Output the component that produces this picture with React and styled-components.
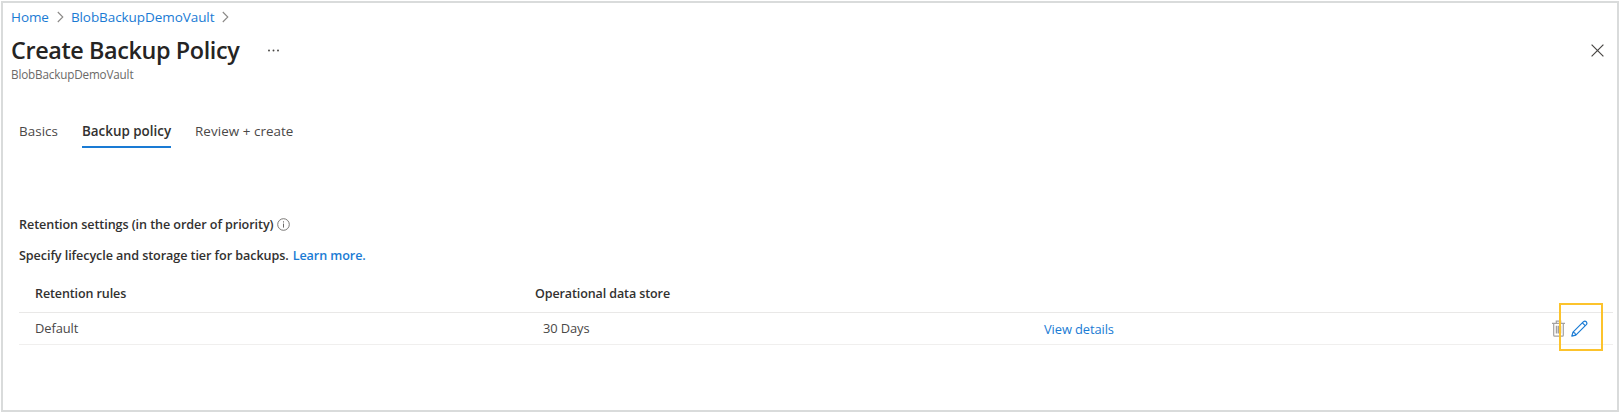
import React from 'react';
import styled, { createGlobalStyle } from 'styled-components';

const Global = createGlobalStyle`
  * { box-sizing: border-box; }
  body { margin: 0; background: #fff; }
`;

const Page = styled.div`
  height: 413px;
  padding: 1px;
  font-family: "Open Sans", "Noto Sans", sans-serif;
  color: #323130;
  white-space: nowrap;
`;

const Blade = styled.main`
  height: 411px;
  border: 2px solid #d9dbdb;
  padding: 4px 4px 0 8px;
`;

const Link = styled.a`
  color: #1a7bd4;
  text-decoration: none;
  cursor: pointer;
`;

const Breadcrumb = styled.nav`
  display: flex;
  align-items: center;
  height: 20px;
  font-size: 13.5px;
  letter-spacing: -0.07px;
  line-height: 20px;
  svg { margin: 0 7px 0 8px; }
`;

const Header = styled.header`
  display: flex;
  align-items: center;
  height: 34px;
  margin-top: 6px;
`;

const Title = styled.h1`
  margin: 0;
  width: 256px;
  font-size: 23.4px;
  font-weight: 600;
  line-height: 34px;
  letter-spacing: -0.39px;
  color: #252423;
`;

const IconButton = styled.button`
  display: flex;
  padding: 0;
  border: 0;
  background: none;
  cursor: pointer;
`;

const CloseButton = styled(IconButton)`
  margin: 0 9px 0 auto;
`;

const Subtitle = styled.div`
  margin-top: -1px;
  font-size: 11.7px;
  line-height: 16px;
  letter-spacing: -0.16px;
  color: #6b6967;
`;

const Tabs = styled.div`
  display: flex;
  gap: 24px;
  margin: 39px 0 0 8px;
`;

const Tab = styled.div`
  padding-bottom: 5px;
  border-bottom: 2px solid ${p => (p.$active ? '#1a7bd4' : 'transparent')};
  font-size: 13.4px;
  font-weight: ${p => (p.$active ? 600 : 400)};
  line-height: 20px;
  letter-spacing: ${p => (p.$active ? '0' : '0.06px')};
  color: ${p => (p.$active ? '#323130' : '#4a4847')};
`;

const Section = styled.section`
  margin: 67px 0 0 8px;
`;

const Label = styled.div`
  display: flex;
  align-items: center;
  gap: ${p => p.$gap}px;
  margin-bottom: ${p => p.$below}px;
  font-size: 12.6px;
  font-weight: 600;
  line-height: 20px;
  letter-spacing: -0.08px;
  svg { margin-top: -2px; }
`;

const Row = styled.div`
  display: grid;
  grid-template-columns: 500px 500px 1fr auto;
  align-items: center;
  height: ${p => (p.$head ? 38 : 32)}px;
  padding: 0 25px 0 16px;
  border-bottom: 1px solid ${p => (p.$head ? '#e9e8e7' : '#f0efee')};
  font-size: ${p => (p.$head ? 12.5 : 12.9)}px;
  font-weight: ${p => (p.$head ? 600 : 400)};
  letter-spacing: -0.1px;
  line-height: 20px;
`;

const Cell = styled.div`
  padding: 0 0 ${p => p.$lift || 0}px ${p => p.$indent || 0}px;
  color: ${p => (p.$soft ? '#4a4847' : 'inherit')};
`;

const Actions = styled.div`
  position: relative;
  display: flex;
  gap: 6px;
  margin-top: -1px;
`;

const Highlight = styled.div`
  position: absolute;
  left: 7px;
  top: -17px;
  width: 44px;
  height: 48px;
  border: 2px solid #fcc32c;
  pointer-events: none;
`;

const Chevron = () => (
  <svg width="7" height="12" viewBox="0 0 7 12" fill="none" stroke="#8a8886" strokeWidth="1.1">
    <path d="M0.8 1 L5.8 6 L0.8 11" />
  </svg>
);

const Dots = () => (
  <svg width="14" height="4" viewBox="0 0 14 4" fill="#484644">
    <circle cx="2" cy="2.5" r="0.95" /><circle cx="6.5" cy="2.5" r="0.95" /><circle cx="11" cy="2.5" r="0.95" />
  </svg>
);

const Close = () => (
  <svg width="13" height="13" viewBox="0 0 13 13" stroke="#484644" strokeWidth="1.2">
    <path d="M0.6 0.6 L12.4 12.4 M12.4 0.6 L0.6 12.4" />
  </svg>
);

const Info = () => (
  <svg width="13" height="13" viewBox="0 0 13 13" fill="none" stroke="#6b6967">
    <circle cx="6.5" cy="6.5" r="5.8" strokeWidth="0.9" />
    <path d="M6.5 5.6 V9.6 M6.5 3.3 V4.5" strokeWidth="1" />
  </svg>
);

const Trash = () => (
  <svg width="13" height="17" viewBox="0 0 13 17" fill="none" stroke="#a3a1a0" strokeWidth="1.2">
    <path d="M0 3.4 H13 M4.3 3.2 V1.2 H8.7 V3.2 M1.7 3.4 V15.2 Q1.7 16.2 2.7 16.2 H10.3 Q11.3 16.2 11.3 15.2 V3.4" />
    <path d="M4.5 5.8 V13.6 M6.5 5.8 V13.6 M8.5 5.8 V13.6" strokeWidth="1.5" />
  </svg>
);

const Pencil = () => (
  <svg width="17" height="17" viewBox="0 0 17 17" fill="none" stroke="#1a7bd4" strokeWidth="1.2" strokeLinejoin="round">
    <path d="M0.8 16.2 L2 12.2 L12.5 1.7 Q13.9 0.5 15.3 1.8 Q16.5 3.2 15.3 4.6 L4.8 15.1 Z" />
    <path d="M11.4 2.8 L14.2 5.6 M2 12.2 Q4.4 12.7 4.8 15.1" />
  </svg>
);

export default function App() {
  return (
    <>
      <Global />
      <Page>
        <Blade>
          <Breadcrumb>
            <Link>Home</Link><Chevron />
            <Link>BlobBackupDemoVault</Link><Chevron />
          </Breadcrumb>
          <Header>
            <Title>Create Backup Policy</Title>
            <IconButton aria-label="More"><Dots /></IconButton>
            <CloseButton aria-label="Close"><Close /></CloseButton>
          </Header>
          <Subtitle>BlobBackupDemoVault</Subtitle>
          <Tabs>
            <Tab>Basics</Tab>
            <Tab $active>Backup policy</Tab>
            <Tab>Review + create</Tab>
          </Tabs>
          <Section>
            <Label $gap={3} $below={11}>Retention settings (in the order of priority) <Info /></Label>
            <Label $gap={4} $below={9}>
              <span>Specify lifecycle and storage tier for backups.</span>
              <Link>Learn more.</Link>
            </Label>
            <Row $head>
              <Cell>Retention rules</Cell>
              <Cell>Operational data store</Cell>
            </Row>
            <Row>
              <Cell $soft $lift={1}>Default</Cell>
              <Cell $soft $lift={1} $indent={8}>30 Days</Cell>
              <Cell $indent={9}><Link>View details</Link></Cell>
              <Actions>
                <IconButton aria-label="Delete"><Trash /></IconButton>
                <IconButton aria-label="Edit"><Pencil /></IconButton>
                <Highlight />
              </Actions>
            </Row>
          </Section>
        </Blade>
      </Page>
    </>
  );
}
